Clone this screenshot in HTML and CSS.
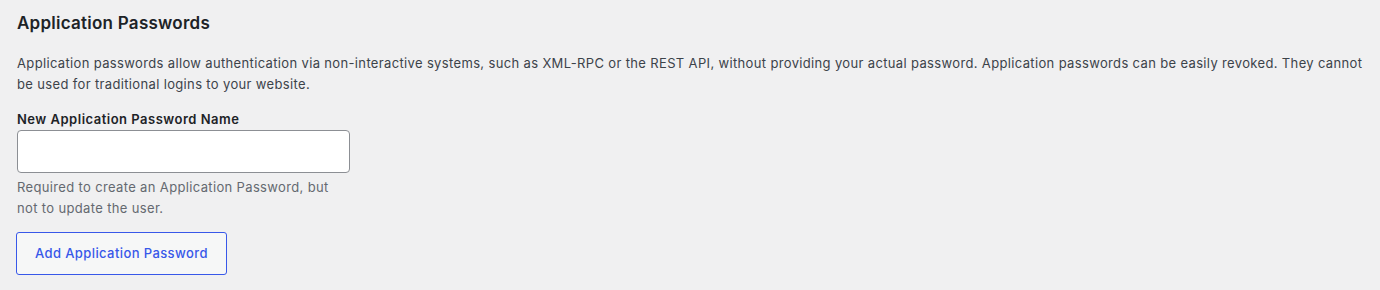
FILE: index.html
```html
<!DOCTYPE html>
<html lang="en">
<head>
  <meta charset="UTF-8">
  <title>Application Passwords</title>
  <link rel="stylesheet" href="styles.css">
</head>
<body>
  <div class="wrap">
    <h2>Application Passwords</h2>
    <p class="intro">Application passwords allow authentication via non-interactive systems, such as XML-RPC or the REST API, without providing your actual password. Application passwords can be easily revoked. They cannot be used for traditional logins to your website.</p>
    <div class="field">
      <label for="new_application_password_name">New Application Password Name</label>
      <input type="text" id="new_application_password_name">
      <p class="description">Required to create an Application Password, but not to update the user.</p>
    </div>
    <button type="button" class="button">Add Application Password</button>
  </div>
</body>
</html>
```

FILE: styles.css
```css
body {
  margin: 0;
  background: #f0f0f1;
  color: #1d2327;
  font-family: Inter, "Noto Sans", sans-serif;
  font-size: 13px;
  line-height: 1.6;
  letter-spacing: 0.35px;
}

.wrap {
  padding: 8px 16px 0 17px;
}

h2 {
  font-size: 17px;
  font-weight: 600;
  margin: 4px 0 17px;
  line-height: 1.4;
  letter-spacing: 0.25px;
}

.intro {
  color: #3c434a;
  margin: 0 0 14px;
  line-height: 21px;
}

.field {
  width: 333px;
}

.field label {
  display: block;
  font-weight: 600;
  line-height: 20px;
  margin-bottom: 1px;
  letter-spacing: 0.5px;
}

.field input {
  display: block;
  box-sizing: border-box;
  width: 100%;
  height: 43px;
  margin: 0;
  border: 1px solid #8c8f94;
  border-radius: 4px;
  background: #fff;
}

.description {
  color: #646970;
  margin: 4px 0 13px;
  line-height: 21px;
}

.button {
  box-sizing: border-box;
  height: 43px;
  padding: 0 18px;
  margin-left: -1px;
  border: 1px solid #3858e9;
  border-radius: 3px;
  background: #f6f7f7;
  color: #3858e9;
  font-family: inherit;
  font-size: 13px;
  font-weight: 500;
  letter-spacing: 0.4px;
  cursor: pointer;
}
```
